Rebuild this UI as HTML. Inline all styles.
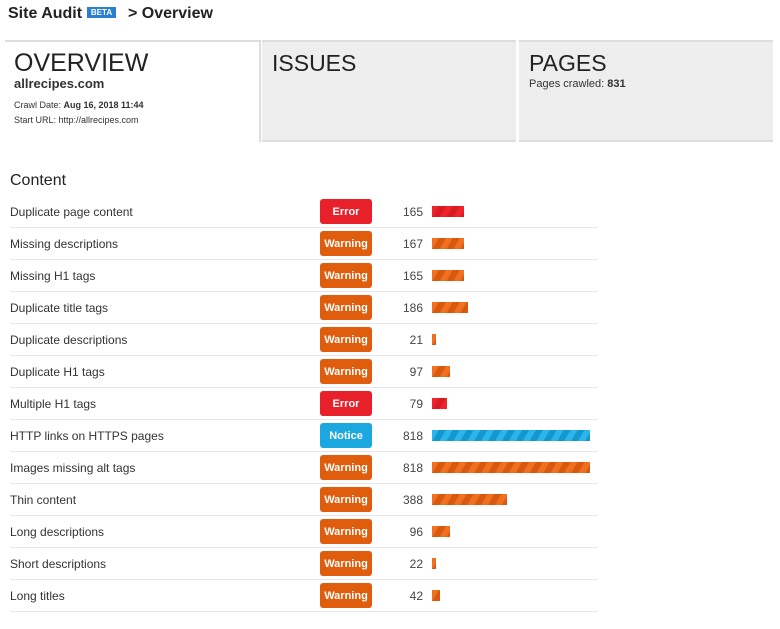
<!DOCTYPE html>
<html><head><style>
body{margin:0;width:780px;height:629px;background:#fff;font-family:"Liberation Sans",sans-serif;color:#222;position:relative;overflow:hidden}
.t{position:absolute;white-space:nowrap}
.tab{position:absolute;top:40px;height:102px;background:#eeeeee;border-top:2px solid #ddd;box-sizing:border-box}
.row{position:absolute;left:10px;width:588px;height:32px;border-bottom:1px solid #e6e6e6;box-sizing:border-box}
.row .l{position:absolute;left:0;top:9px;font-size:12px;color:#333}
.b{position:absolute;left:310px;top:3px;width:52px;height:25px;border-radius:3px;color:#fff;font-size:11px;font-weight:bold;display:flex;align-items:center;justify-content:center}
.n{position:absolute;left:370px;width:43px;text-align:right;top:9px;font-size:12px;color:#444}
.bar{position:absolute;left:422px;top:10px;height:11px}
.E{background:#e8202a}.W{background:#e05d0e}.N{background:#1ba8e0}
.bE{background:repeating-linear-gradient(120deg,#f0222c 0 6px,#d81a22 6px 12px)}
.bW{background:repeating-linear-gradient(120deg,#f07020 0 6px,#d9580f 6px 12px)}
.bN{background:repeating-linear-gradient(120deg,#2bb5ea 0 6px,#1298cf 6px 12px)}
</style></head><body>
<div class="t" style="left:8px;top:5px;font-size:16px;font-weight:bold">Site Audit</div>
<div class="t" style="left:87px;top:7px;width:29px;height:11px;background:#2a7fd0;color:#fff;font-size:8px;font-weight:bold;line-height:11px;text-align:center">BETA</div>
<div class="t" style="left:128px;top:5px;font-size:16px;font-weight:bold">&gt; Overview</div>
<div class="tab" style="left:5px;width:256px;background:#fff;border-right:2px solid #ddd"></div>
<div class="tab" style="left:262px;width:254px;border-bottom:2px solid #ddd"></div>
<div class="tab" style="left:519px;width:254px;border-bottom:2px solid #ddd"></div>
<div class="t" style="left:14px;top:49px;font-size:25px">OVERVIEW</div>
<div class="t" style="left:14px;top:76px;font-size:13px;font-weight:bold;color:#333">allrecipes.com</div>
<div class="t" style="left:14px;top:100px;font-size:9px;color:#333">Crawl Date: <b>Aug 16, 2018 11:44</b></div>
<div class="t" style="left:14px;top:115px;font-size:9px;color:#333">Start URL: http://allrecipes.com</div>
<div class="t" style="left:272px;top:50px;font-size:23px">ISSUES</div>
<div class="t" style="left:529px;top:50px;font-size:23px">PAGES</div>
<div class="t" style="left:529px;top:78px;font-size:11px;color:#333">Pages crawled: <b>831</b></div>
<div class="t" style="left:10px;top:172px;font-size:16px">Content</div>
<div class="row" style="top:196px"><span class="l">Duplicate page content</span><span class="b E">Error</span><span class="n">165</span><span class="bar bE" style="width:32px"></span></div>
<div class="row" style="top:228px"><span class="l">Missing descriptions</span><span class="b W">Warning</span><span class="n">167</span><span class="bar bW" style="width:32px"></span></div>
<div class="row" style="top:260px"><span class="l">Missing H1 tags</span><span class="b W">Warning</span><span class="n">165</span><span class="bar bW" style="width:32px"></span></div>
<div class="row" style="top:292px"><span class="l">Duplicate title tags</span><span class="b W">Warning</span><span class="n">186</span><span class="bar bW" style="width:36px"></span></div>
<div class="row" style="top:324px"><span class="l">Duplicate descriptions</span><span class="b W">Warning</span><span class="n">21</span><span class="bar bW" style="width:4px"></span></div>
<div class="row" style="top:356px"><span class="l">Duplicate H1 tags</span><span class="b W">Warning</span><span class="n">97</span><span class="bar bW" style="width:18px"></span></div>
<div class="row" style="top:388px"><span class="l">Multiple H1 tags</span><span class="b E">Error</span><span class="n">79</span><span class="bar bE" style="width:15px"></span></div>
<div class="row" style="top:420px"><span class="l">HTTP links on HTTPS pages</span><span class="b N">Notice</span><span class="n">818</span><span class="bar bN" style="width:158px"></span></div>
<div class="row" style="top:452px"><span class="l">Images missing alt tags</span><span class="b W">Warning</span><span class="n">818</span><span class="bar bW" style="width:158px"></span></div>
<div class="row" style="top:484px"><span class="l">Thin content</span><span class="b W">Warning</span><span class="n">388</span><span class="bar bW" style="width:75px"></span></div>
<div class="row" style="top:516px"><span class="l">Long descriptions</span><span class="b W">Warning</span><span class="n">96</span><span class="bar bW" style="width:18px"></span></div>
<div class="row" style="top:548px"><span class="l">Short descriptions</span><span class="b W">Warning</span><span class="n">22</span><span class="bar bW" style="width:4px"></span></div>
<div class="row" style="top:580px"><span class="l">Long titles</span><span class="b W">Warning</span><span class="n">42</span><span class="bar bW" style="width:8px"></span></div>
</body></html>
